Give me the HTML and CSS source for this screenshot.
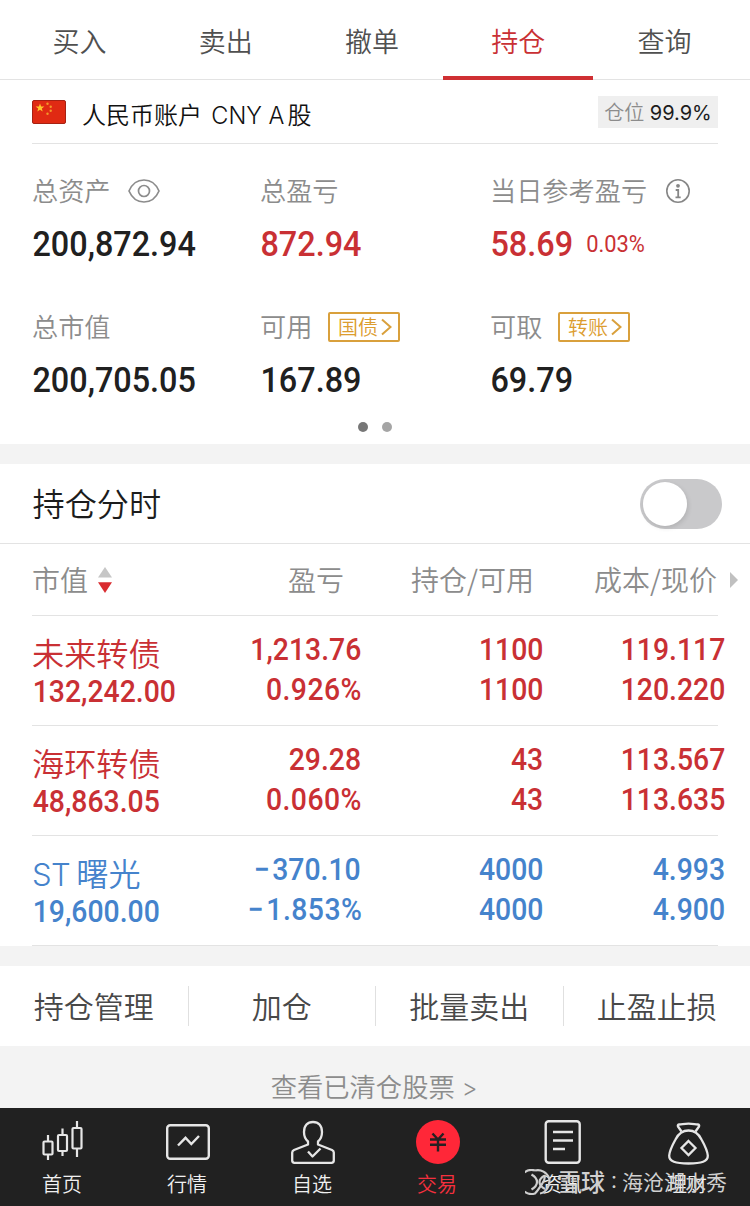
FILE: index.html
```html
<!DOCTYPE html>
<html lang="zh-CN">
<head>
<meta charset="utf-8">
<title>持仓</title>
<link rel="stylesheet" href="styles.css">
</head>
<body>
<div class="app">
  <nav class="tabs">
    <span class="tab">买入</span><span class="tab">卖出</span><span class="tab">撤单</span><span class="tab active">持仓</span><span class="tab">查询</span>
  </nav>

  <header class="account">
    <svg class="flag" viewBox="0 0 34 24">
      <rect x=".5" y=".5" width="33" height="23" rx="1.5" fill="#e02a13" stroke="#a62113"/>
      <polygon points="8,3.4 9.1,6.5 12.4,6.5 9.8,8.5 10.7,11.6 8,9.7 5.3,11.6 6.2,8.5 3.6,6.5 6.9,6.5" fill="#ffc52c"/>
      <g fill="#f3982a"><circle cx="15.5" cy="3.7" r="1.2"/><circle cx="18.7" cy="6.7" r="1.2"/><circle cx="18.7" cy="10.7" r="1.2"/><circle cx="15.5" cy="13.8" r="1.2"/></g>
    </svg>
    <span class="account-name">人民币账户 <span class="latin">CNY A</span><span class="stock">股</span></span>
    <span class="position">仓位 <b>99.9%</b></span>
  </header>

  <section class="summary">
    <div class="metric">
      <div class="label">总资产
        <svg class="eye" viewBox="0 0 32 24" fill="none" stroke="#8c8c8c" stroke-width="1.7"><path d="M1 12C4 5 9.500 1 16 1s12 4 15 11c-3 7-8.500 11-15 11S4 19 1 12z"/><circle cx="16" cy="12" r="5.500"/></svg>
      </div>
      <div class="value">200,872.94</div>
    </div>
    <div class="metric">
      <div class="label">总盈亏</div>
      <div class="value up">872.94</div>
    </div>
    <div class="metric">
      <div class="label">当日参考盈亏
        <svg class="info" viewBox="0 0 24 24" fill="none" stroke="#868686" stroke-width="1.6"><circle cx="12" cy="12" r="11.200"/><circle cx="12" cy="6.800" r="1.900" fill="#868686" stroke="none"/><path d="M9.700 11h2.500v7.200M9.500 18.300h5.200" stroke-width="1.800"/></svg>
      </div>
      <div class="value up">58.69 <small>0.03%</small></div>
    </div>
    <div class="metric">
      <div class="label">总市值</div>
      <div class="value">200,705.05</div>
    </div>
    <div class="metric">
      <div class="label">可用 <span class="link">国债<svg viewBox="0 0 11 18"><path d="M1 1.500l8.500 7.500L1 16.500"/></svg></span></div>
      <div class="value">167.89</div>
    </div>
    <div class="metric">
      <div class="label">可取 <span class="link">转账<svg viewBox="0 0 11 18"><path d="M1 1.500l8.500 7.500L1 16.500"/></svg></span></div>
      <div class="value">69.79</div>
    </div>
    <div class="pager"><i class="dot on"></i><i class="dot"></i></div>
  </section>

  <section class="holdings">
    <div class="intraday"><span>持仓分时</span><span class="switch"><i></i></span></div>
    <div class="grid thead">
      <span class="c1">市值<svg class="sort" viewBox="0 0 14 26"><path d="M7 0l7 10.500H0z" fill="#c6c6c6"/><path d="M0 15.300h14L7 26z" fill="#d92c30"/></svg></span>
      <span class="c2">盈亏</span><span class="c3">持仓/可用</span><span class="c4">成本/现价</span>
      <svg class="more" viewBox="0 0 8 16"><path d="M0 0l8 8-8 8z" fill="#c0c0c0"/></svg>
    </div>
    <div class="grid row up">
      <div class="c1"><span class="name">未来转债</span><span class="num">132,242.00</span></div>
      <div class="c2"><span>1,213.76</span><span class="pct">0.926%</span></div>
      <div class="c3"><span>1100</span><span>1100</span></div>
      <div class="c4"><span>119.117</span><span>120.220</span></div>
    </div>
    <div class="grid row up">
      <div class="c1"><span class="name">海环转债</span><span class="num">48,863.05</span></div>
      <div class="c2"><span>29.28</span><span class="pct">0.060%</span></div>
      <div class="c3"><span>43</span><span>43</span></div>
      <div class="c4"><span>113.567</span><span>113.635</span></div>
    </div>
    <div class="grid row down">
      <div class="c1"><span class="name"><span class="latin">ST</span>曙光</span><span class="num">19,600.00</span></div>
      <div class="c2"><span><i class="minus">−</i>370.10</span><span class="pct"><i class="minus">−</i>1.853%</span></div>
      <div class="c3"><span>4000</span><span>4000</span></div>
      <div class="c4"><span>4.993</span><span>4.900</span></div>
    </div>
  </section>

  <section class="actions">
    <span>持仓管理</span><span>加仓</span><span>批量卖出</span><span>止盈止损</span>
  </section>
  <div class="cleared">查看已清仓股票 <span class="latin">&gt;</span></div>

  <footer class="dock">
    <div class="item">
      <svg viewBox="0 0 44 44" fill="none" stroke="#e6e6e6" stroke-width="2.200"><rect x="2.500" y="21.500" width="9" height="13" rx="1"/><path d="M7 15v6.500M7 34.500V40"/><rect x="17" y="15" width="9" height="16" rx="1"/><path d="M21.500 8.500V15M21.500 31v5"/><rect x="31.500" y="8" width="9" height="20.500" rx="1"/><path d="M36 1v7M36 28.500V37"/></svg>
      <span>首页</span>
    </div>
    <div class="item">
      <svg viewBox="0 0 44 44" fill="none" stroke="#e6e6e6" stroke-width="2.400"><rect x="1.200" y="5.200" width="41.600" height="33.600" rx="3"/><path d="M12 25.500l7.500-7.700 5.800 6.200 7.700-8"/></svg>
      <span>行情</span>
    </div>
    <div class="item">
      <svg viewBox="0 0 44 44" fill="none" stroke="#e6e6e6" stroke-width="2.300" stroke-linejoin="round"><path d="M17 21.500c-3-2.500-4-5.500-4-9.500 0-6.500 3.500-10 9-10s9 3.500 9 10c0 4-1 7-4 9.500v3l14 5.500c1 .500 1.800 1.200 1.800 2.500v8c0 1.500-.8 2.300-2.300 2.300H3.500c-1.500 0-2.300-.8-2.300-2.300v-8c0-1.300.8-2 1.800-2.500l14-5.500z"/><path d="M17 31.500l4.500 5 8-8"/></svg>
      <span>自选</span>
    </div>
    <div class="item current">
      <svg viewBox="0 0 44 44"><circle cx="22" cy="22" r="22" fill="#ff2738"/><path d="M16.500 13.500l5.500 6 5.500-6M14 19.500h16M14 24.800h16M22 19v12.500" fill="none" stroke="#252022" stroke-width="2.400"/></svg>
      <span>交易</span>
    </div>
    <div class="item">
      <svg viewBox="0 0 44 44" fill="none" stroke="#e6e6e6" stroke-width="2.400"><rect x="4.700" y="1.200" width="34" height="41.500" rx="3"/><path d="M12 12h20M12 20.500h20M12 29h12"/></svg>
      <span>资讯</span>
    </div>
    <div class="item">
      <svg viewBox="0 0 44 44" fill="none" stroke="#e6e6e6" stroke-width="2.300" stroke-linejoin="round"><path d="M15.500 11.500L12 6.500c-.5-1 0-2 1.200-2 3 0 4.500-.8 9.300-.8s6.300.8 9.300.8c1.200 0 1.700 1 1.200 2l-3.500 5"/><path d="M22.500 10.500c6 0 10 3 13 9 2.500 4.500 6 12 6.300 16 .3 6-6.300 8-19.300 8s-19.600-2-19.300-8c.3-4 3.800-11.500 6.300-16 3-6 7-9 13-9z"/><path d="M22.500 21l7 7-7 7-7-7z" stroke-linejoin="miter"/></svg>
      <span>理财</span>
    </div>
    <div class="watermark">
      <svg viewBox="0 0 26 26" fill="none" stroke="#cfcfcf" stroke-width="2.200"><path d="M10 1.500A12 12 0 1 0 10 24.500c3-3 4.500-6 7-9.500 2-3 3.500-5.500 2.500-8"/><path d="M6.500 5.500c3.500 2 5.500 4.500 5.500 7.500s-2 5.500-5.500 7.500"/><path d="M10 1.500c6-1.500 12 2 14 7.500 2 7-3 14.500-9 15.500M20 6.500c-4 2-5.500 4-5.500 6.500 0 3 2.500 5.500 5.500 7"/></svg>
      <b>雪球</b><i>：</i><span>海沧湖水秀</span>
    </div>
  </footer>
</div>
</body>
</html>
```
FILE: styles.css
```css
* { box-sizing: border-box; }
body { margin: 0; background: #f3f3f3; font-family: Inter, "Noto Sans CJK SC", sans-serif; }
.app { width: 750px; height: 1206px; overflow: hidden; font-family: "Noto Sans CJK SC", sans-serif; font-weight: 350; color: #1c1c1c; display: flex; flex-direction: column; }
svg { display: block; flex: none; }
.latin { font-family: Inter, sans-serif; line-height: 1; }

.tabs { height: 80px; flex: none; padding: 0 12.5px 0 6.5px; display: flex; background: #fff; border-bottom: 1px solid #e3e3e3; }
.tab { flex: 1; position: relative; text-align: center; font-size: 27px; line-height: 81px; color: #505050; }
.tab.active { color: #c93034; }
.tab.active::after { content: ""; position: absolute; left: 50%; bottom: -1px; width: 150px; height: 4px; margin-left: -75.5px; background: #cf3033; }

.account { height: 64px; flex: none; padding: 0 32px; display: flex; align-items: center; background: linear-gradient(#e3e3e3, #e3e3e3) 32px 63px / 686px 1px no-repeat #fff; }
.flag { width: 34px; height: 24px; }
.account-name { margin-left: 16px; padding-top: 4px; font-size: 24px; line-height: 40px; white-space: nowrap; color: #111; }
.account-name .latin { font-size: 23.5px; margin-left: 4px; }
.account-name .stock { margin-left: 3px; }
.position { margin-left: auto; width: 120px; height: 32px; background: #efefef; font-size: 20px; line-height: 32px; color: #8c8c8c; text-align: center; white-space: nowrap; }
.position b { font: 400 20px/32px Inter, sans-serif; margin-left: 1px; color: #1c1c1c; }

.summary { height: 300px; flex: none; padding: 26px 0 0 32px; background: #fff; display: grid; grid-template-columns: 228px 230px 1fr; grid-template-rows: 136px 116px 10px; align-content: start; margin-bottom: 20px; }
.metric { white-space: nowrap; }
.label { height: 40px; display: flex; align-items: center; font-size: 26.2px; line-height: 40px; color: #8c8c8c; }
.eye { width: 32px; height: 24px; margin: 1px 0 0 17.4px; }
.info { width: 24px; height: 24px; margin: 2px 0 0 18.8px; }
.link { display: flex; align-items: center; width: 72px; height: 30px; margin: 2px 0 0 15.6px; border: 2px solid #d9a03c; border-radius: 2px; padding-left: 8px; font-size: 20px; line-height: 26px; color: #dc9d2f; }
.link svg { width: 11px; height: 18px; margin-left: 3px; fill: none; stroke: #d9a03c; stroke-width: 2; }
.value { margin-top: 12px; font: 500 35.5px/44px Roboto, sans-serif; color: #202020; transform: scaleX(.912); transform-origin: left; padding-left: .5px; }
.value small { font-size: 24px; font-weight: 400; margin-left: 5.5px; vertical-align: 4px; line-height: 1; }
.pager { grid-column: 1 / -1; display: flex; gap: 14px; padding-left: 326px; align-items: center; }
.dot { width: 10px; height: 10px; border-radius: 50%; background: #a5a5a5; }
.dot.on { background: #777; }
.up, .value.up { color: #c93034; }
.down { color: #4583cc; }

.holdings { height: 482px; flex: none; background: #fff; margin-bottom: 20px; }
.intraday { height: 80px; padding: 0 28px 0 32.5px; display: flex; align-items: center; justify-content: space-between; border-bottom: 1px solid #e3e3e3; font-size: 32.2px; }
.intraday > span:first-child { padding-bottom: 4px; }
.switch { width: 82px; height: 50px; border-radius: 25px; padding: 3px; background: #c9c9cb; }
.switch i { display: block; width: 44px; height: 44px; border-radius: 50%; background: #fff; box-shadow: 1px 2px 5px rgba(0,0,0,.12); }
.grid { display: grid; grid-template-columns: 180px 149px 182px 182px 25px; padding-left: 32px; background: linear-gradient(#e3e3e3, #e3e3e3) 32px 100% / 686px 1px no-repeat; }
.thead { height: 72px; align-items: center; font-size: 28px; line-height: 38px; color: #8c8c8c; white-space: nowrap; }
.thead > span { padding-bottom: 2px; }
.thead .c1 { display: flex; align-items: center; }
.thead .c2, .thead .c3, .thead .c4 { text-align: right; }
.thead .c2 { padding-right: 17px; }
.thead .c3 { padding-right: 9px; }
.thead .c4 { padding-right: 8px; }
.sort { width: 14px; height: 26px; margin: 2px 0 0 10px; }
.more { width: 8px; height: 16px; margin-left: 5px; }
.row { height: 110px; font: 500 31px/40px Roboto, sans-serif; white-space: nowrap; }
.row > div { display: flex; flex-direction: column; align-items: flex-end; padding-top: 14px; }
.row > div > span { transform: scaleX(.915); transform-origin: right; }
.row > div > .pct { letter-spacing: .5px; margin-right: -1px; }
.minus { font-style: normal; margin-right: 2.5px; }
.row > .c1 { align-items: flex-start; padding-top: 16px; }
.row > .c1 > .name { height: 40px; font: 350 32.2px/40px "Noto Sans CJK SC", sans-serif; transform: none; }
.name .latin { font-size: 31px; letter-spacing: -.5px; margin-right: 6px; }
.row > .c1 > .num { line-height: 40px; transform-origin: left; padding-left: .8px; }

.actions { height: 80px; flex: none; display: grid; grid-template-columns: repeat(4, 1fr); align-items: center; background: #fff; }
.actions span { height: 40px; line-height: 39px; text-align: center; font-size: 30px; color: #484848; border-left: 1px solid #e0e0e0; }
.actions span:first-child { border-left: 0; }
.cleared { height: 62px; flex: none; padding: 20px 2px 0 0; text-align: center; font-size: 26.3px; line-height: 40px; color: #8c8c8c; }
.cleared .latin { font-size: 24px; margin-left: 1px; }

.dock { position: relative; height: 98px; flex: none; display: grid; grid-template-columns: repeat(6, 125px); background: #212121; }
.item { display: flex; flex-direction: column; align-items: center; padding-top: 12px; font-size: 20px; line-height: 30px; color: #f0f0f0; }
.item svg { width: 44px; height: 44px; margin: 0 0 5px 1px; overflow: visible; }
.item span { padding-right: 1px; }
.item.current { color: #f5303e; }
.watermark { position: absolute; left: 525px; top: 57px; height: 32px; display: flex; align-items: center; color: #d0d0d0; font-size: 21px; line-height: 32px; white-space: nowrap; }
.watermark svg { width: 26px; height: 26px; margin: 2px 6px 0 0; }
.watermark b { font-size: 24px; font-weight: 500; }
.watermark i { font: 400 18px/32px "Noto Sans CJK JP", sans-serif; margin-right: -1px; }
.watermark span { font-weight: 400; }
```
